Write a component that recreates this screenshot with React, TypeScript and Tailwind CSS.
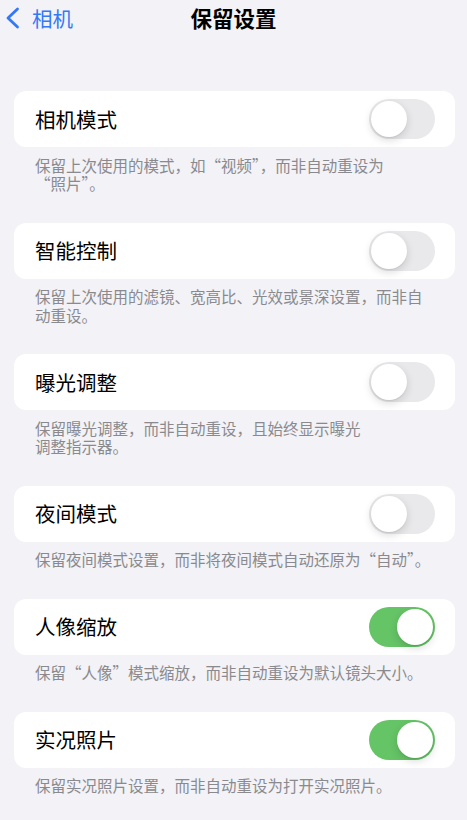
const font = { fontFamily: '"Noto Sans CJK SC", "Noto Sans", sans-serif' };

type Item = { label: string; note: string[]; on: boolean };

const items: Item[] = [
  { label: "相机模式", note: ["保留上次使用的模式，如“视频”，而非自动重设为", "“照片”。"], on: false },
  { label: "智能控制", note: ["保留上次使用的滤镜、宽高比、光效或景深设置，而非自", "动重设。"], on: false },
  { label: "曝光调整", note: ["保留曝光调整，而非自动重设，且始终显示曝光", "调整指示器。"], on: false },
  { label: "夜间模式", note: ["保留夜间模式设置，而非将夜间模式自动还原为“自动”。"], on: false },
  { label: "人像缩放", note: ["保留“人像”模式缩放，而非自动重设为默认镜头大小。"], on: true },
  { label: "实况照片", note: ["保留实况照片设置，而非自动重设为打开实况照片。"], on: true },
];

function Toggle({ on }: { on: boolean }) {
  return (
    <div
      className={`w-[66px] h-[40px] rounded-full p-[2px] flex items-center ${
        on ? "bg-[#65c466] justify-end" : "bg-[#e9e9eb] justify-start"
      }`}
    >
      <div className="w-[36px] h-[36px] rounded-full bg-white shadow-[0_3px_8px_rgba(0,0,0,0.15),0_1px_1px_rgba(0,0,0,0.06)]" />
    </div>
  );
}

function Section({ item }: { item: Item }) {
  return (
    <div>
      <div className="ml-[14px] mr-[12px] h-[56px] rounded-[12px] bg-white flex items-center justify-between pl-[21px] pr-[20px]">
        <span className="text-[20.5px] text-black leading-none">{item.label}</span>
        <Toggle on={item.on} />
      </div>
      <p className="pl-[35px] pt-[8.5px] pb-[30px] text-[15.5px] leading-[18.5px] text-[#8a8a8e] whitespace-nowrap">
        {item.note.map((line, i) => (
          <span key={line}>
            {i > 0 && <br />}
            {line}
          </span>
        ))}
      </p>
    </div>
  );
}

export default function App() {
  return (
    <div className="w-[467px] h-[820px] bg-[#f2f2f7] overflow-hidden" style={font}>
      {/* nav bar */}
      <div className="relative h-[36px] flex items-center">
        <div className="flex items-center pl-[5px] gap-[12px] text-[#3478f6]">
          <svg width="15" height="22" viewBox="0 0 15 22" fill="none">
            <path d="M12.5 2 L3 11 L12.5 20" stroke="#3478f6" strokeWidth="2.8" strokeLinecap="round" strokeLinejoin="round" />
          </svg>
          <span className="text-[20.5px] leading-none">相机</span>
        </div>
        <div className="absolute left-0 right-0 text-center text-[21.5px] font-semibold text-black leading-none pointer-events-none">
          保留设置
        </div>
      </div>

      <div className="pt-[55px]">
        {items.map((it) => (
          <Section key={it.label} item={it} />
        ))}
      </div>
    </div>
  );
}
